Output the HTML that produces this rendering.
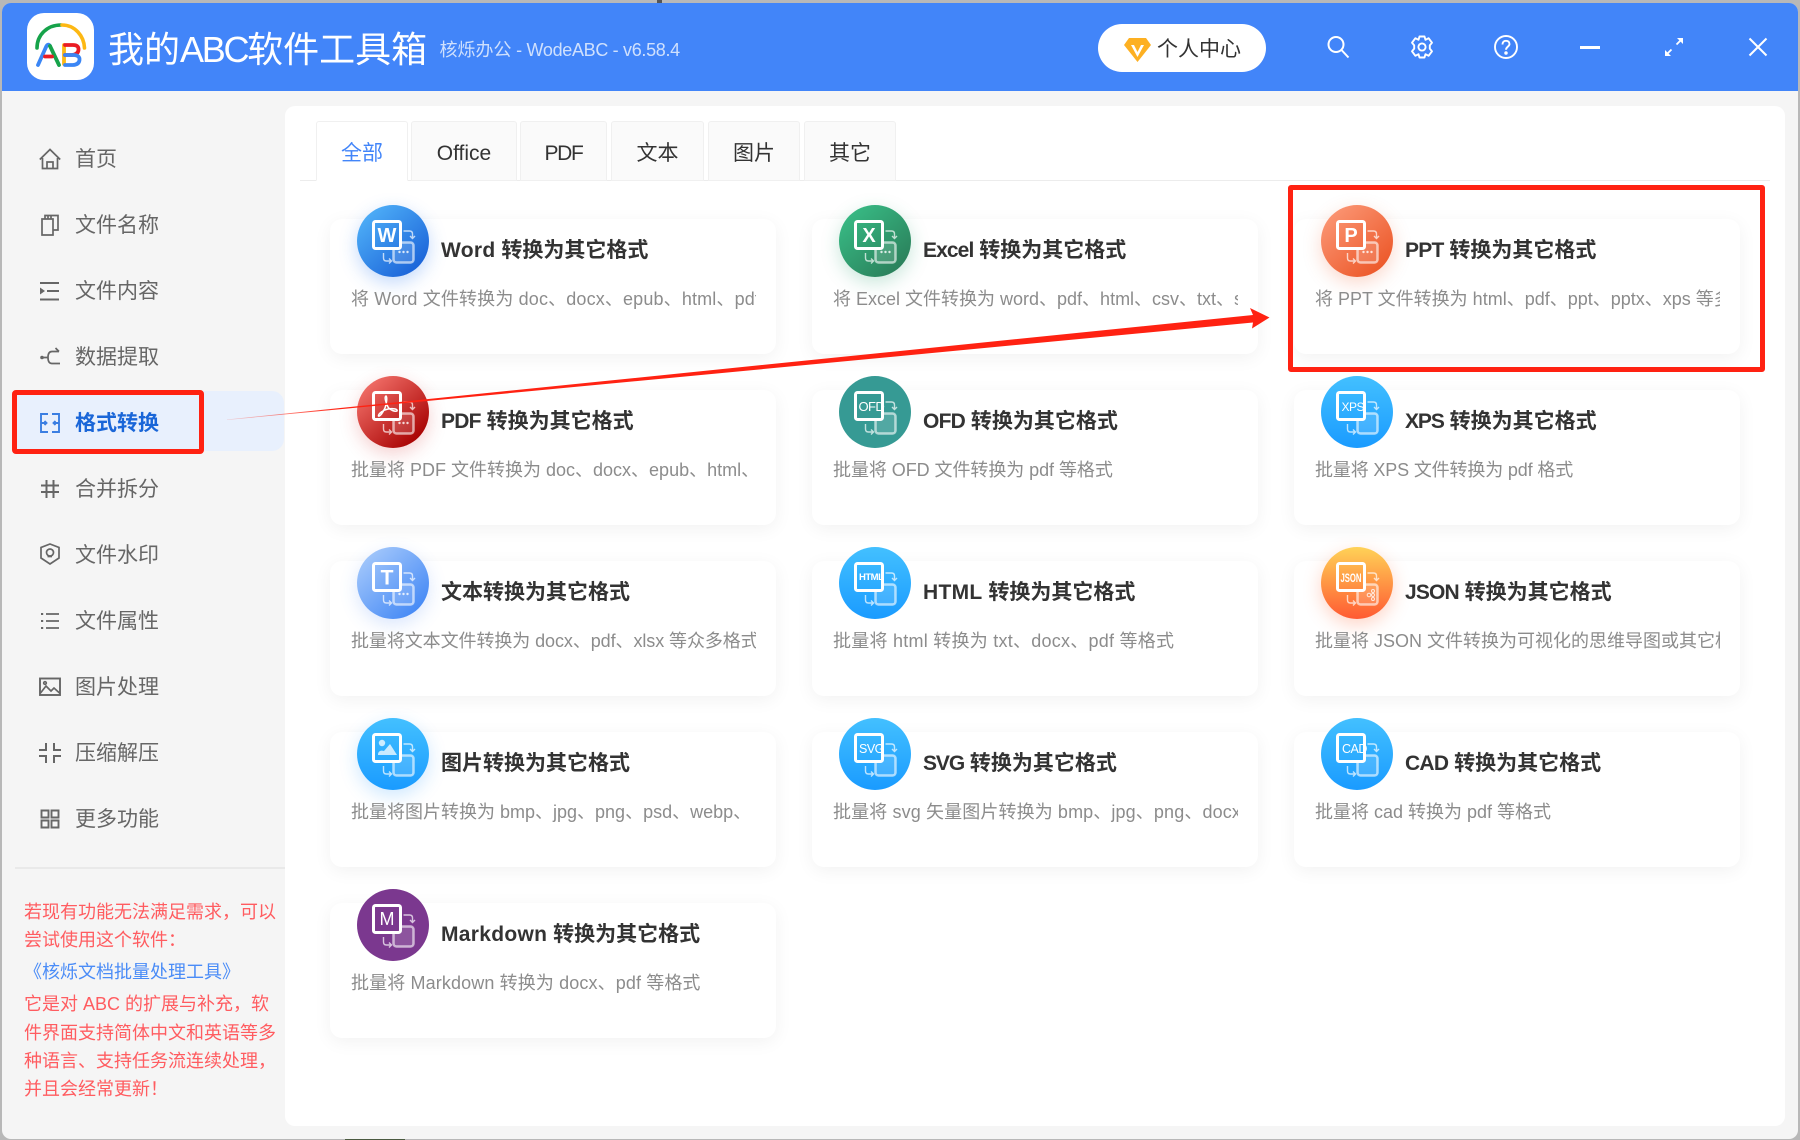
<!DOCTYPE html>
<html lang="zh-CN"><head><meta charset="utf-8"><title>我的ABC软件工具箱</title>
<style>
html,body{margin:0;padding:0}
body{width:1800px;height:1140px;overflow:hidden;position:relative;background:#b8b8b8;font-family:"Liberation Sans","Noto Sans CJK SC",sans-serif}
div,span,svg{box-sizing:border-box}
#win{position:absolute;left:2px;top:3px;width:1796px;height:1136px;background:#f5f5f5;border-radius:9px 9px 9px 9px;overflow:hidden}
#hd{position:absolute;left:2px;top:3px;width:1796px;height:88px;background:#4285f9;border-radius:9px 9px 0 0}
.a{position:absolute;white-space:nowrap}
#panel{position:absolute;left:285px;top:106px;width:1500px;height:1020px;background:#fff;border-radius:10px}
.tab{position:absolute;top:121px;height:60px;background:#fafafa;border:1px solid #f0f0f0;border-radius:3px 3px 0 0;text-align:center;font-size:21px;line-height:64px;color:#333}
.tab.on{background:#fff;border-bottom-color:#fff;color:#4285f9;z-index:2}
.m{position:absolute;left:75px;font-size:21px;line-height:30px;color:#666;white-space:nowrap}
.mi{position:absolute;left:39px;width:22px;height:22px;fill:none;stroke:#666;stroke-width:1.7}
.card{position:absolute;width:446px;height:135px;background:#fff;border-radius:12px;box-shadow:0 4px 18px rgba(0,0,0,.055)}
.ic{position:absolute;left:27px;top:-14px;width:72px;height:72px;overflow:visible;border-radius:50%}
.t{position:absolute;left:111px;top:16px;font-size:21px;line-height:32px;font-weight:bold;color:#333;white-space:nowrap}
.d{position:absolute;left:21px;top:66px;width:405px;height:28px;overflow:hidden;font-size:18px;line-height:28px;color:#8c8c8c;white-space:nowrap}
.n{position:absolute;left:24px;font-size:18px;line-height:28px;color:#ff5c60;white-space:nowrap}
.sq{fill:none;stroke:#fff;stroke-width:3}
.lb{fill:#fff;font-family:"Liberation Sans",sans-serif}
</style></head><body>

<svg width="0" height="0" style="position:absolute"><defs>
<linearGradient id="gW" gradientUnits="userSpaceOnUse" x1="8" y1="6" x2="62" y2="66"><stop offset="0" stop-color="#4fb0f8"/><stop offset="1" stop-color="#1a62d8"/></linearGradient>
<linearGradient id="gX" gradientUnits="userSpaceOnUse" x1="8" y1="6" x2="62" y2="66"><stop offset="0" stop-color="#38bb85"/><stop offset="1" stop-color="#2a7f5a"/></linearGradient>
<linearGradient id="gP" gradientUnits="userSpaceOnUse" x1="8" y1="6" x2="62" y2="66"><stop offset="0" stop-color="#fb9674"/><stop offset="1" stop-color="#ec5728"/></linearGradient>
<linearGradient id="gR" gradientUnits="userSpaceOnUse" x1="8" y1="6" x2="62" y2="66"><stop offset="0" stop-color="#f3716a"/><stop offset="1" stop-color="#a60000"/></linearGradient>
<linearGradient id="gB" gradientUnits="userSpaceOnUse" x1="0" y1="0" x2="0" y2="72"><stop offset="0" stop-color="#43c0ff"/><stop offset="1" stop-color="#1a9bff"/></linearGradient>
<linearGradient id="gJ" gradientUnits="userSpaceOnUse" x1="0" y1="0" x2="0" y2="72"><stop offset="0" stop-color="#ffd257"/><stop offset="1" stop-color="#ff5a32"/></linearGradient>
<linearGradient id="gT" gradientUnits="userSpaceOnUse" x1="8" y1="6" x2="62" y2="66"><stop offset="0" stop-color="#a4c8fb"/><stop offset="1" stop-color="#4388f5"/></linearGradient>
<g id="back" fill="none" stroke="#fff">
<rect x="36.500" y="37.500" width="20" height="20" rx="3" stroke-width="2.500" stroke-opacity=".6" fill="#fff" fill-opacity=".14"/>
<path d="M46.500 26H52.500Q55.500 26 55.500 29V33M53 31L55.500 33.500L58 31" stroke-width="1.400" stroke-opacity=".7"/>
<path d="M26.500 48V53Q26.500 56 29.500 56H34M32 53.500L34.500 56L32 58.500" stroke-width="1.400" stroke-opacity=".7"/>
</g>
<g id="dots" fill="#fff" fill-opacity=".8"><circle cx="42.500" cy="47" r="1.200"/><circle cx="46.500" cy="47" r="1.200"/><circle cx="50.500" cy="47" r="1.200"/></g>
</defs></svg>

<div class="a" style="left:657px;top:0;width:5px;height:3px;background:#555"></div>
<div class="a" style="left:345px;top:1139px;width:60px;height:1px;background:#4a5a40"></div>
<div id="win"></div>
<div id="hd"></div>

<!-- logo -->
<div class="a" style="left:27px;top:13px;width:67px;height:67px;background:#fff;border-radius:17px"></div>
<svg class="a" style="left:27px;top:13px" width="67" height="67" viewBox="27 13 67 67" fill="none" stroke-linecap="round">
<path d="M37 48C37 35 47 25 61 25" stroke="#16a34a" stroke-width="3.600"/>
<path d="M62 25C75 25 84 36 84.500 48" stroke="#fdb813" stroke-width="3.600"/>
<path d="M38 65L46 47Q48 43 50 46" stroke="#3b86f5" stroke-width="3.800"/>
<path d="M50 46L59 65" stroke="#16a34a" stroke-width="3.800"/>
<path d="M45 56.500H52" stroke="#ea1c24" stroke-width="3.800"/>
<path d="M64 45V64" stroke="#fdb813" stroke-width="3.800"/>
<path d="M65 45H73Q79 45 78.500 50Q78 54.500 72 55H65" stroke="#ea1c24" stroke-width="3.800"/>
<path d="M65 55H74Q80 55.500 79.500 60Q79 64.500 73 65H65" stroke="#3b86f5" stroke-width="3.800"/>
</svg>

<div class="a" style="left:108px;top:26px;font-size:36px;line-height:48px;color:#fff">我的<span style="letter-spacing:-2.300px">ABC</span>软件工具箱</div>
<div class="a" style="left:439.500px;top:36px;font-size:18px;line-height:28px;color:#cfe0fd">核烁办公<span style="letter-spacing:-.32px"> - WodeABC - v6.58.4</span></div>

<!-- user -->
<div class="a" style="left:1098px;top:24px;width:168px;height:48px;border-radius:24px;background:#fff"></div>
<svg class="a" style="left:1124px;top:37px" width="27" height="25" viewBox="0 0 27 25"><path d="M5 1H22L27 8L13.500 25L0 8Z" fill="#fdb022"/><path d="M7 8H10L13.500 15L17 8H20L13.500 20Z" fill="#fff"/></svg>
<div class="a" style="left:1157px;top:35px;font-size:21px;line-height:30px;color:#333">个人中心</div>

<!-- window icons -->
<svg class="a" style="left:1326px;top:35px" width="24" height="24" viewBox="0 0 24 24" fill="none" stroke="#fff" stroke-width="2"><circle cx="10" cy="9.500" r="7.500"/><path d="M15.500 15L22.500 22.500"/></svg>
<svg class="a" style="left:1410px;top:35px" width="24" height="24" viewBox="0 0 24 24" fill="none" stroke="#fff" stroke-width="1.900" stroke-linejoin="round"><path d="M9.500 1.500H14.500L15.500 4.800L18.600 3.200L22 7.700L19.800 10.400V13.600L22 16.300L18.600 20.800L15.500 19.200L14.500 22.500H9.500L8.500 19.200L5.400 20.800L2 16.300L4.200 13.600V10.400L2 7.700L5.400 3.200L8.500 4.800Z"/><circle cx="12" cy="12" r="3.600"/></svg>
<svg class="a" style="left:1494px;top:35px" width="24" height="24" viewBox="0 0 24 24" fill="none" stroke="#fff" stroke-width="1.900"><circle cx="12" cy="12" r="11"/><path d="M8.500 9.500C8.500 7 10 5.800 12 5.800C14 5.800 15.500 7 15.500 9C15.500 11.500 12 11.800 12 14.800"/><circle cx="12" cy="18" r=".8" fill="#fff"/></svg>
<div class="a" style="left:1580px;top:46px;width:20px;height:2.500px;background:#fff"></div>
<svg class="a" style="left:1664px;top:37px" width="20" height="20" viewBox="0 0 20 20" fill="none" stroke="#fff" stroke-width="1.800"><path d="M2 18L7.500 12.500M12.500 7.500L18 2"/><path d="M1 13V19H7Z" fill="#fff" stroke="none"/><path d="M19 7V1H13Z" fill="#fff" stroke="none"/></svg>
<svg class="a" style="left:1748px;top:37px" width="20" height="20" viewBox="0 0 20 20" fill="none" stroke="#fff" stroke-width="2"><path d="M1.500 1.500L18.500 18.500M18.500 1.500L1.500 18.500"/></svg>

<!-- sidebar -->
<div class="a" style="left:15px;top:391px;width:269px;height:60px;background:#e8f0fd;border-radius:0 12px 12px 0"></div>

<svg class="mi" style="top:148px" viewBox="0 0 22 22"><path d="M0.800 11.500L11 1.500L21.200 11.500M3.500 10V20.500H18.500V10M8 20.500V14H14V20.500"/></svg>
<div class="m" style="top:145px">首页</div>
<svg class="mi" style="top:214px" viewBox="0 0 22 22"><path d="M3 5H14V21H3ZM6 5V1.500H19V16H14M9 1.500V5M12 1.500V5"/></svg>
<div class="m" style="top:211px">文件名称</div>
<svg class="mi" style="top:280px" viewBox="0 0 22 22"><path d="M1 3H20M8 11H20M1 19.500H20" stroke-width="2"/><path d="M1 7.500L6 11L1 14.500Z" fill="#666" stroke="none"/></svg>
<div class="m" style="top:277px">文件内容</div>
<svg class="mi" style="top:346px" viewBox="0 0 22 22"><circle cx="3" cy="11.500" r="1.800" fill="#666" stroke="none"/><path d="M4 11.500H9M20 5.500H13Q9 5.500 9 11.500Q9 17.500 13 17.500H21M16.500 2L20 5.500"/></svg>
<div class="m" style="top:343px">数据提取</div>
<svg class="mi" style="top:412px;stroke:#3a7ee2" viewBox="0 0 22 22"><path d="M9 2H2V20H9M13 2H20V20H13M2 11H7.500M5.500 9L7.500 11L5.500 13M20 11H14.500M16.500 9L14.500 11L16.500 13" stroke-width="1.900"/></svg>
<div class="m" style="top:409px;color:#1a66d8;font-weight:bold">格式转换</div>
<svg class="mi" style="top:478px" viewBox="0 0 22 22"><path d="M7.500 2V20M14.500 2V20M2 7.500H20M2 14H20" stroke-width="2"/></svg>
<div class="m" style="top:475px">合并拆分</div>
<svg class="mi" style="top:543px" viewBox="0 0 22 22"><path d="M11 1L20 4.500V15L11 21L2 15V4.500Z"/><circle cx="11" cy="9.500" r="3.500"/><path d="M8.500 13.500H13"/></svg>
<div class="m" style="top:541px">文件水印</div>
<svg class="mi" style="top:610px" viewBox="0 0 22 22"><path d="M7 4H20M7 11H20M7 18H20"/><path d="M2 4H4.200M2 11H4.200M2 18H4.200" stroke-width="2"/></svg>
<div class="m" style="top:607px">文件属性</div>
<svg class="mi" style="top:676px" viewBox="0 0 22 22"><rect x="1" y="2.500" width="20" height="16.500" stroke-width="1.900"/><path d="M1.500 17L7 10L12 15L15 12L20.500 17"/><circle cx="6" cy="7" r="1.300"/></svg>
<div class="m" style="top:673px">图片处理</div>
<svg class="mi" style="top:742px" viewBox="0 0 22 22"><path d="M7 1V8H0M15 1V8H22M7 21V14H0M15 21V14H22" stroke-width="2"/></svg>
<div class="m" style="top:739px">压缩解压</div>
<svg class="mi" style="top:808px" viewBox="0 0 22 22"><path d="M2.500 2.500H9.500V9.500H2.500ZM12.500 2.500H19.500V9.500H12.500ZM2.500 12.500H9.500V19.500H2.500ZM12.500 12.500H19.500V19.500H12.500Z" stroke-width="1.900"/></svg>
<div class="m" style="top:805px">更多功能</div>

<div class="a" style="left:15px;top:867px;width:270px;height:2px;background:#e9e9e9"></div>
<div class="n" style="top:898px">若现有功能无法满足需求，可以</div>
<div class="n" style="top:926px">尝试使用这个软件：</div>
<div class="n" style="top:958px;color:#4a8cf7">《核烁文档批量处理工具》</div>
<div class="n" style="top:990px">它是对 ABC 的扩展与补充，软</div>
<div class="n" style="top:1019px">件界面支持简体中文和英语等多</div>
<div class="n" style="top:1047px">种语言、支持任务流连续处理，</div>
<div class="n" style="top:1075px">并且会经常更新！</div>

<!-- content -->
<div id="panel"></div>
<div class="a" style="left:300px;top:180px;width:1470px;height:1px;background:#ececec"></div>
<div class="tab on" style="left:316px;width:92px">全部</div>
<div class="tab" style="left:411px;width:106px">Office</div>
<div class="tab" style="left:520px;width:87px;letter-spacing:-1.300px">PDF</div>
<div class="tab" style="left:611px;width:93px">文本</div>
<div class="tab" style="left:708px;width:92px">图片</div>
<div class="tab" style="left:804px;width:92px">其它</div>

<!-- row 1 -->
<div class="card" style="left:330px;top:219px">
<svg class="ic" style="box-shadow:0 6px 18px rgba(40,120,240,.28)" viewBox="0 0 72 72"><circle cx="36" cy="36" r="36" fill="url(#gW)"/><use href="#back"/><use href="#dots"/><rect class="sq" x="16.500" y="16.500" width="27" height="27" rx="2" style="fill:url(#gW)"/><text class="lb" x="30" y="37" text-anchor="middle" font-size="20" font-weight="bold">W</text></svg>
<div class="t"><span style="letter-spacing:.3px">Word</span> 转换为其它格式</div><div class="d" style="letter-spacing:.15px">将 Word 文件转换为 doc、docx、epub、html、pdf、ppt 等格式</div></div>

<div class="card" style="left:812px;top:219px">
<svg class="ic" style="box-shadow:0 6px 18px rgba(40,160,110,.25)" viewBox="0 0 72 72"><circle cx="36" cy="36" r="36" fill="url(#gX)"/><use href="#back"/><use href="#dots"/><rect class="sq" x="16.500" y="16.500" width="27" height="27" rx="2" style="fill:url(#gX)"/><text class="lb" x="30" y="37" text-anchor="middle" font-size="20" font-weight="bold">X</text></svg>
<div class="t"><span style="letter-spacing:-.9px">Excel</span> 转换为其它格式</div><div class="d">将 Excel 文件转换为 word、pdf、html、csv、txt、svg 等格式</div></div>

<div class="card" style="left:1294px;top:219px">
<svg class="ic" style="box-shadow:0 6px 18px rgba(240,100,50,.25)" viewBox="0 0 72 72"><circle cx="36" cy="36" r="36" fill="url(#gP)"/><use href="#back"/><use href="#dots"/><rect class="sq" x="16.500" y="16.500" width="27" height="27" rx="2" style="fill:url(#gP)"/><text class="lb" x="30" y="37" text-anchor="middle" font-size="20" font-weight="bold">P</text></svg>
<div class="t"><span style="letter-spacing:-.75px">PPT</span> 转换为其它格式</div><div class="d">将 PPT 文件转换为 html、pdf、ppt、pptx、xps 等多种格式</div></div>

<!-- row 2 -->
<div class="card" style="left:330px;top:390px">
<svg class="ic" style="box-shadow:0 6px 18px rgba(210,40,40,.22)" viewBox="0 0 72 72"><circle cx="36" cy="36" r="36" fill="url(#gR)"/><use href="#back"/><use href="#dots"/><rect class="sq" x="16.500" y="16.500" width="27" height="27" rx="2" style="fill:url(#gR)"/><path d="M29 20C27 21 29 27 31 31C33 34 38 36 40 35C41 33 36 32 31 33C26 34 21 38 21.500 40C23 41 26 36 28 32C29.500 28 30.500 21 29 20Z" fill="none" stroke="#fff" stroke-width="1.500"/></svg>
<div class="t"><span style="letter-spacing:-.75px">PDF</span> 转换为其它格式</div><div class="d">批量将 PDF 文件转换为 doc、docx、epub、html、ppt 等格式</div></div>

<div class="card" style="left:812px;top:390px">
<svg class="ic" viewBox="0 0 72 72"><circle cx="36" cy="36" r="36" fill="#369a94"/><use href="#back"/><rect class="sq" x="16.500" y="16.500" width="27" height="27" rx="2" style="fill:#369a94"/><text class="lb" x="19.500" y="35" font-size="13" letter-spacing="-.6">OFD</text></svg>
<div class="t"><span style="letter-spacing:-.75px">OFD</span> 转换为其它格式</div><div class="d" style="letter-spacing:-.06px">批量将 OFD 文件转换为 pdf 等格式</div></div>

<div class="card" style="left:1294px;top:390px">
<svg class="ic" viewBox="0 0 72 72"><circle cx="36" cy="36" r="36" fill="url(#gB)"/><use href="#back"/><rect class="sq" x="16.500" y="16.500" width="27" height="27" rx="2" style="fill:url(#gB)"/><text class="lb" x="20.500" y="35" font-size="12" letter-spacing="-.5">XPS</text></svg>
<div class="t"><span style="letter-spacing:-1.100px">XPS</span> 转换为其它格式</div><div class="d" style="letter-spacing:-.15px">批量将 XPS 文件转换为 pdf 格式</div></div>

<!-- row 3 -->
<div class="card" style="left:330px;top:561px">
<svg class="ic" style="box-shadow:0 6px 18px rgba(70,130,245,.2)" viewBox="0 0 72 72"><circle cx="36" cy="36" r="36" fill="url(#gT)"/><use href="#back"/><use href="#dots"/><rect class="sq" x="16.500" y="16.500" width="27" height="27" rx="2" style="fill:url(#gT)"/><text class="lb" x="30" y="37.500" text-anchor="middle" font-size="21" font-weight="bold">T</text></svg>
<div class="t">文本转换为其它格式</div><div class="d" style="letter-spacing:-.08px">批量将文本文件转换为 docx、pdf、xlsx 等众多格式</div></div>

<div class="card" style="left:812px;top:561px">
<svg class="ic" viewBox="0 0 72 72"><circle cx="36" cy="36" r="36" fill="url(#gB)"/><use href="#back"/><rect class="sq" x="16.500" y="16.500" width="27" height="27" rx="2" style="fill:url(#gB)"/><text class="lb" x="20" y="33" font-size="9.500" font-weight="bold" letter-spacing="-.5">HTML</text></svg>
<div class="t"><span style="letter-spacing:.3px">HTML</span> 转换为其它格式</div><div class="d" style="letter-spacing:.25px">批量将 html 转换为 txt、docx、pdf 等格式</div></div>

<div class="card" style="left:1294px;top:561px">
<svg class="ic" style="box-shadow:0 6px 18px rgba(255,100,50,.28)" viewBox="0 0 72 72"><circle cx="36" cy="36" r="36" fill="url(#gJ)"/><use href="#back"/><g fill="none" stroke="#fff" stroke-width="1" opacity=".8"><circle cx="48" cy="48" r="1.800"/><circle cx="52" cy="44" r="1.500"/><circle cx="52" cy="48" r="1.500"/><circle cx="52" cy="52" r="1.500"/></g><rect class="sq" x="16.500" y="16.500" width="27" height="27" rx="2" style="fill:url(#gJ)"/><text class="lb" x="30" y="35" text-anchor="middle" font-size="11.500" font-weight="bold" textLength="21" lengthAdjust="spacingAndGlyphs">JSON</text></svg>
<div class="t"><span style="letter-spacing:-.85px">JSON</span> 转换为其它格式</div><div class="d">批量将 JSON 文件转换为可视化的思维导图或其它格式</div></div>

<!-- row 4 -->
<div class="card" style="left:330px;top:732px">
<svg class="ic" style="box-shadow:0 6px 18px rgba(30,150,255,.22)" viewBox="0 0 72 72"><circle cx="36" cy="36" r="36" fill="url(#gB)"/><use href="#back"/><rect class="sq" x="16.500" y="16.500" width="27" height="27" rx="2" style="fill:url(#gB)"/><circle cx="25" cy="25" r="3.200" fill="#fff" fill-opacity=".75"/><path d="M21 37C21 33 24 32 27 33L33 26L40 37Z" fill="#fff" fill-opacity=".75"/></svg>
<div class="t">图片转换为其它格式</div><div class="d">批量将图片转换为 bmp、jpg、png、psd、webp、</div></div>

<div class="card" style="left:812px;top:732px">
<svg class="ic" viewBox="0 0 72 72"><circle cx="36" cy="36" r="36" fill="url(#gB)"/><use href="#back"/><rect class="sq" x="16.500" y="16.500" width="27" height="27" rx="2" style="fill:url(#gB)"/><text class="lb" x="20" y="35" font-size="12.500" letter-spacing="-.5">SVG</text></svg>
<div class="t"><span style="letter-spacing:-1.100px">SVG</span> 转换为其它格式</div><div class="d" style="letter-spacing:.12px">批量将 svg 矢量图片转换为 bmp、jpg、png、docx 等格式</div></div>

<div class="card" style="left:1294px;top:732px">
<svg class="ic" viewBox="0 0 72 72"><circle cx="36" cy="36" r="36" fill="url(#gB)"/><use href="#back"/><rect class="sq" x="16.500" y="16.500" width="27" height="27" rx="2" style="fill:url(#gB)"/><text class="lb" x="21" y="35" font-size="12.500" letter-spacing="-.5">CAD</text></svg>
<div class="t"><span style="letter-spacing:-.75px">CAD</span> 转换为其它格式</div><div class="d">批量将 cad 转换为 pdf 等格式</div></div>

<!-- row 5 -->
<div class="card" style="left:330px;top:903px">
<svg class="ic" viewBox="0 0 72 72"><circle cx="36" cy="36" r="36" fill="#7b388f"/><use href="#back"/><rect class="sq" x="16.500" y="16.500" width="27" height="27" rx="2" style="fill:#7b388f"/><text class="lb" x="30" y="36" text-anchor="middle" font-size="18">M</text></svg>
<div class="t"><span style="letter-spacing:.3px">Markdown</span> 转换为其它格式</div><div class="d" style="letter-spacing:.12px">批量将 Markdown 转换为 docx、pdf 等格式</div></div>

<!-- annotations -->
<div class="a" style="left:12px;top:390px;width:192px;height:64px;border:5px solid #ff2212;border-radius:4px;z-index:5"></div>
<div class="a" style="left:1288px;top:185px;width:477px;height:187px;border:5.500px solid #ff2212;border-radius:3px;z-index:5"></div>
<svg class="a" style="left:0;top:0;z-index:6" width="1800" height="1140" viewBox="0 0 1800 1140">
<defs><linearGradient id="ar" gradientUnits="userSpaceOnUse" x1="225" y1="420" x2="340" y2="408"><stop offset="0" stop-color="#ff2212" stop-opacity=".15"/><stop offset="1" stop-color="#ff2212"/></linearGradient></defs>
<path d="M227 419.500L1253 315L1250 308L1269.500 317.500L1252 328.500L1253 322.500L227 420Z" fill="url(#ar)"/>
</svg>
</body></html>
